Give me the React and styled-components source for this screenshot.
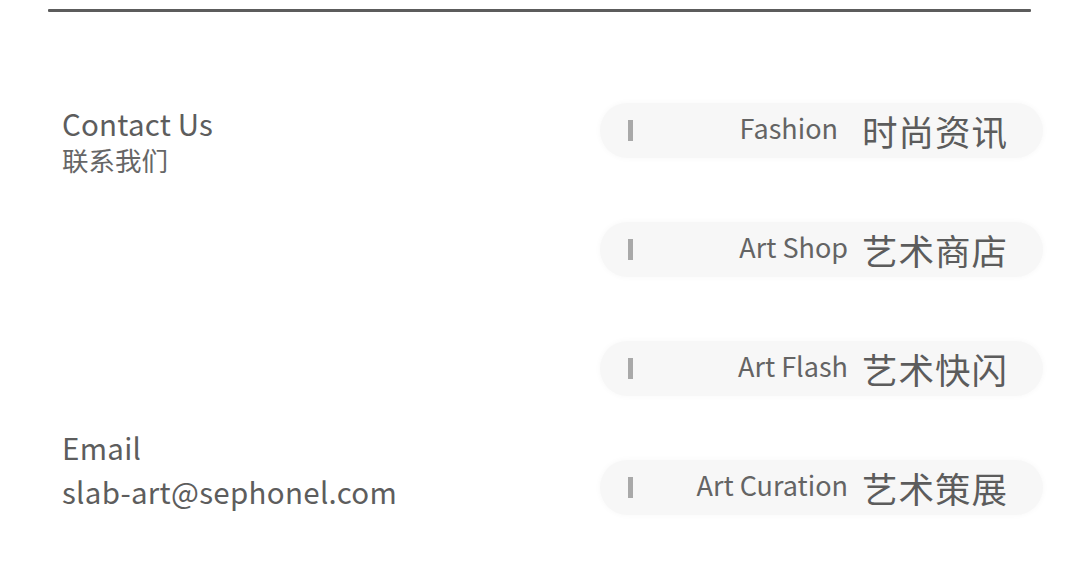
import React from 'react';
import styled, { createGlobalStyle } from 'styled-components';

const GlobalStyle = createGlobalStyle`
  html, body {
    margin: 0;
    padding: 0;
    background: #ffffff;
  }
  body {
    font-family: "Noto Sans CJK SC", "Noto Sans", sans-serif;
    color: #5d5d5d;
  }
`;

const Page = styled.div`
  width: 1080px;
  height: 584px;
  padding: 9px 48px 0 48px;
  box-sizing: border-box;
  overflow: hidden;
`;

const Rule = styled.div`
  width: 983px;
  height: 3px;
  background: #5c5c5c;
  border-radius: 1px;
`;

const Main = styled.div`
  display: grid;
  grid-template-columns: 552px 443px;
  margin-top: 91px;
`;

const LeftCol = styled.div`
  display: flex;
  flex-direction: column;
  justify-content: space-between;
  padding-left: 14px;
  padding-bottom: 2px;
`;

const InfoBlock = styled.div`
  display: flex;
  flex-direction: column;
`;

const Title = styled.div`
  font-size: 29.5px;
  line-height: 34px;
  letter-spacing: 0.2px;
  margin-top: 3px;
`;

const SubTitle = styled.div`
  font-size: 26.5px;
  line-height: 30px;
  color: #666666;
  margin-top: 5px;
`;

const EmailText = styled.div`
  font-size: 29.5px;
  line-height: 44px;
  letter-spacing: 0.3px;
`;

const Menu = styled.div`
  display: flex;
  flex-direction: column;
  gap: 64px;
`;

const Pill = styled.div`
  height: 55px;
  border-radius: 28px;
  background: #f7f7f7;
  box-shadow: 0 0 6px rgba(0, 0, 0, 0.035);
  display: flex;
  align-items: center;
  padding: 0 35px 0 28px;
`;

const Marker = styled.span`
  width: 5px;
  height: 21px;
  background: #a9a9a9;
  flex-shrink: 0;
`;

const Label = styled.span`
  margin-left: auto;
  margin-right: ${({ $gap }) => $gap}px;
  font-size: 27px;
  line-height: 1;
  color: #646464;
  margin-top: -7px;
`;

const Chinese = styled.span`
  font-size: 35.5px;
  line-height: 1;
  letter-spacing: 1px;
  color: #5c5c5c;
`;

const items = [
  { en: 'Fashion', zh: '时尚资讯', gap: 24 },
  { en: 'Art Shop', zh: '艺术商店', gap: 14 },
  { en: 'Art Flash', zh: '艺术快闪', gap: 14 },
  { en: 'Art Curation', zh: '艺术策展', gap: 14 },
];

export default function App() {
  return (
    <Page>
      <GlobalStyle />
      <Rule />
      <Main>
        <LeftCol>
          <InfoBlock>
            <Title>Contact Us</Title>
            <SubTitle>联系我们</SubTitle>
          </InfoBlock>
          <InfoBlock>
            <EmailText>Email</EmailText>
            <EmailText>slab-art@sephonel.com</EmailText>
          </InfoBlock>
        </LeftCol>
        <Menu>
          {items.map((item) => (
            <Pill key={item.en}>
              <Marker />
              <Label $gap={item.gap}>{item.en}</Label>
              <Chinese>{item.zh}</Chinese>
            </Pill>
          ))}
        </Menu>
      </Main>
    </Page>
  );
}
